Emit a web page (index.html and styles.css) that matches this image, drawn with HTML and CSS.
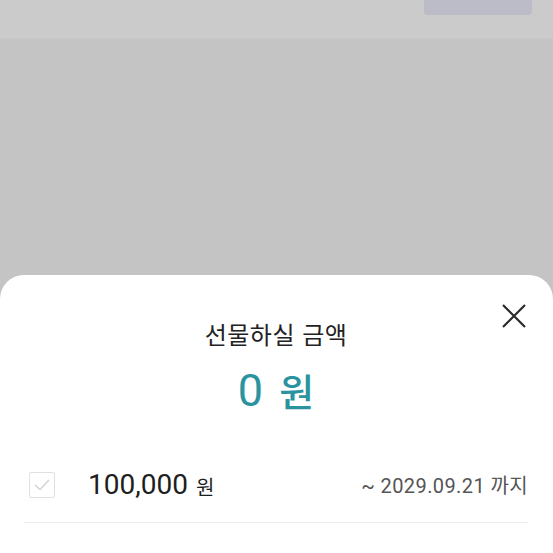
FILE: index.html
```html
<!DOCTYPE html>
<html lang="ko">
<head>
<meta charset="utf-8">
<link rel="stylesheet" href="styles.css">
</head>
<body>
<div class="page">
  <header class="topbar">
    <div class="top-btn"></div>
  </header>
  <div class="dim"></div>
  <section class="sheet">
    <button class="close" aria-label="닫기">
      <svg width="24" height="24" viewBox="0 0 24 24"><path d="M1 1L23 23M23 1L1 23" stroke="#2a2a2a" stroke-width="2.2" fill="none"/></svg>
    </button>
    <h2 class="title">선물하실 금액</h2>
    <div class="total"><span class="num">0</span><span class="unit">원</span></div>
    <div class="row">
      <span class="check">
        <svg width="16" height="12" viewBox="0 0 16 12"><path d="M1 6L6 10.5L15 1" stroke="#d4d4d4" stroke-width="1.6" fill="none"/></svg>
      </span>
      <span class="amount">100,000</span><span class="won">원</span>
      <span class="until">~ 2029.09.21 까지</span>
    </div>
  </section>
</div>
</body>
</html>
```
FILE: styles.css
```css
* { box-sizing: border-box; }
html, body { margin: 0; padding: 0; }
body {
  font-family: Roboto, "Noto Sans CJK KR", sans-serif;
  background: #c4c4c4;
  width: 553px;
  height: 553px;
  overflow: hidden;
}
.page { display: flex; flex-direction: column; height: 553px; }
.topbar {
  height: 39px;
  background: #cbcbcb;
  border-bottom: 1px solid #c7c7c7;
  display: flex;
  justify-content: flex-end;
  padding-right: 21px;
  flex: none;
}
.top-btn {
  width: 108px;
  height: 15px;
  background: #bcbcc8;
  border-radius: 0 0 4px 4px;
}
.dim { height: 236px; flex: none; }
.sheet {
  position: relative;
  flex: 1;
  background: #fff;
  border-radius: 24px 24px 0 0;
  padding: 43px 25px 0 24px;
}
.close {
  position: absolute;
  top: 29px;
  right: 27px;
  width: 24px;
  height: 24px;
  padding: 0;
  border: 0;
  background: none;
  display: flex;
}
.title {
  margin: 0;
  height: 32px;
  text-align: center;
  font-family: "Noto Sans CJK KR", sans-serif;
  font-weight: 400;
  font-size: 24px;
  line-height: 32px;
  letter-spacing: 0.5px;
  color: #222;
}
.total {
  margin-top: 15px;
  height: 50px;
  display: flex;
  justify-content: center;
  align-items: baseline;
  gap: 16px;
  color: #2b939f;
}
.num { font-size: 45px; line-height: 50px; font-weight: 400; }
.unit { font-family: "Noto Sans CJK KR", sans-serif; font-size: 38px; line-height: 50px; font-weight: 500; }
.row {
  margin-top: 32px;
  display: flex;
  align-items: center;
  height: 76px;
  border-bottom: 1px solid #ececec;
}
.check {
  width: 26px;
  height: 26px;
  margin-left: 5px;
  border: 1px solid #e0e0e0;
  border-radius: 2px;
  display: flex;
  align-items: center;
  justify-content: center;
}
.amount {
  margin-left: 33px;
  font-size: 28px;
  color: #1e1e1e;
}
.won {
  margin-left: 8px;
  font-family: "Noto Sans CJK KR", sans-serif;
  font-size: 20px;
  color: #1e1e1e;
  margin-top: 4px;
}
.until {
  margin-left: auto;
  font-size: 20px;
  letter-spacing: 0.4px;
  color: #555;
}
```
